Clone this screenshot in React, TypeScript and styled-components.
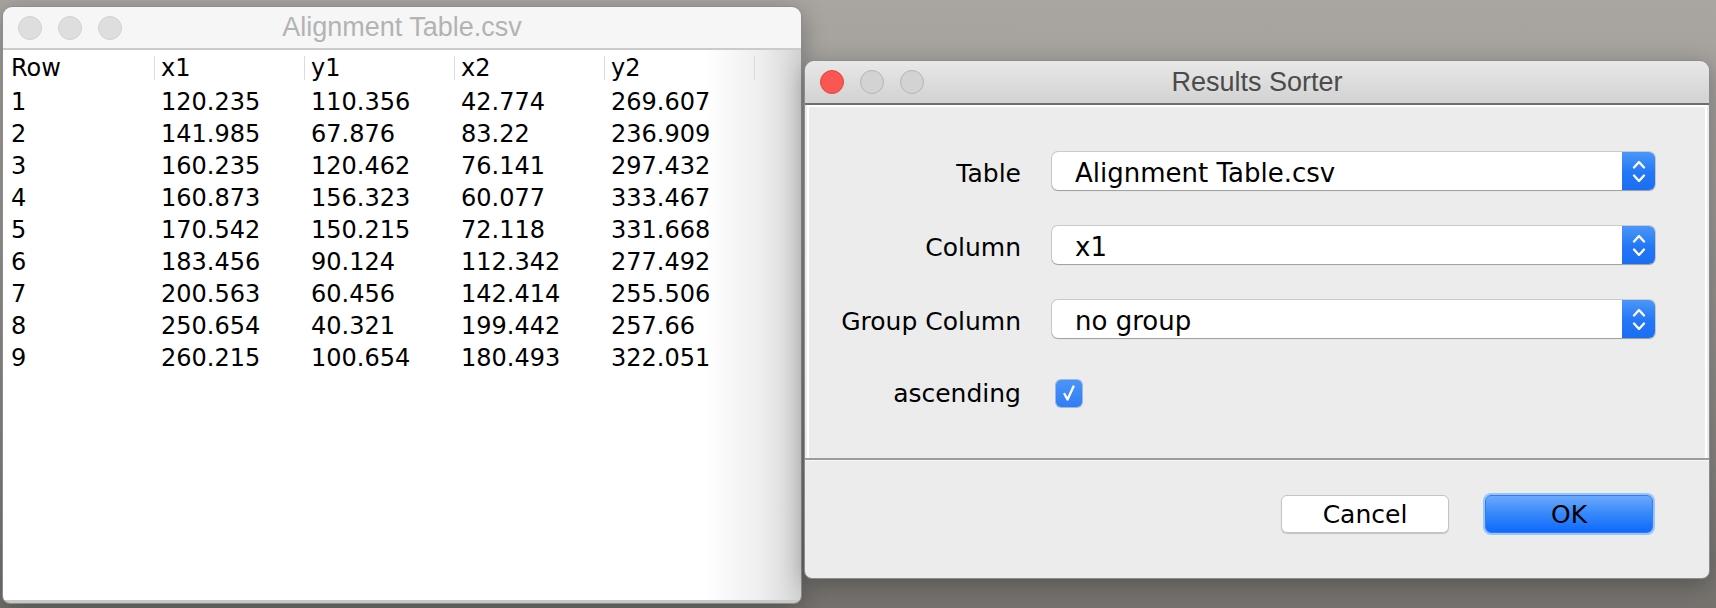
import React from 'react';
import styled, { createGlobalStyle } from 'styled-components';

const GlobalStyle = createGlobalStyle`
  html, body { margin: 0; padding: 0; }
  body { width: 1716px; height: 608px; overflow: hidden; background: #8f8c88; }
  * { box-sizing: border-box; }
`;

const Desktop = styled.div`
  width: 1716px;
  height: 608px;
  padding: 6px 0 0 2px;
  display: flex;
  align-items: flex-start;
  gap: 2px;
  background: linear-gradient(180deg, #a9a6a2 0%, #9e9b97 35%, #8a8783 75%, #75726e 100%);
`;

const WindowFrame = styled.div<{ $w: number; $h: number; $top?: number }>`
  width: ${p => p.$w}px;
  height: ${p => p.$h}px;
  margin-top: ${p => p.$top ?? 0}px;
  display: flex;
  flex-direction: column;
  border: 1px solid #8d8d8d;
  border-radius: 10px 10px 8px 8px;
  overflow: hidden;
  box-shadow: 0 6px 24px rgba(0, 0, 0, 0.3);
`;

const TitleBar = styled.div<{ $active?: boolean }>`
  flex: none;
  height: ${p => (p.$active ? 44 : 43)}px;
  display: grid;
  grid-template-columns: 1fr auto 1fr;
  align-items: center;
  background: ${p => (p.$active ? 'linear-gradient(180deg, #e8e8e8 0%, #d2d2d2 100%)' : '#f6f6f6')};
  border-bottom: 2px solid ${p => (p.$active ? '#6e6e6e' : '#cbcbcb')};
`;

const Lights = styled.div`
  display: flex;
  gap: 16px;
  padding-left: 15px;
`;

const Light = styled.span<{ $color: string; $ring: string }>`
  width: 24px;
  height: 24px;
  border-radius: 50%;
  background: ${p => p.$color};
  border: 1px solid ${p => p.$ring};
`;

const Title = styled.div<{ $active?: boolean }>`
  font-family: 'Liberation Sans', Arial, sans-serif;
  font-size: 27px;
  color: ${p => (p.$active ? '#4b4b4b' : '#b3b3b3')};
  white-space: nowrap;
`;

const TableBody = styled.div`
  flex: 1;
  padding-left: 2px;
  background: linear-gradient(90deg, #ffffff 0%, #ffffff 88%, #eeeeee 95%, #d4d4d4 100%);
  border-bottom: 3px solid #c9c9c9;
  font-family: 'DejaVu Sans', 'Lucida Grande', sans-serif;
  font-size: 24px;
  color: #000;
`;

const Row = styled.div<{ $header?: boolean }>`
  display: grid;
  grid-template-columns: repeat(5, 150px);
  height: ${p => (p.$header ? 36 : 32)}px;
  align-items: center;
`;

const Cell = styled.div<{ $header?: boolean }>`
  padding-left: 6px;
  line-height: ${p => (p.$header ? 24 : 32)}px;
  border-right: ${p => (p.$header ? '1px solid #dcdcdc' : 'none')};
  white-space: nowrap;
`;

const DialogBody = styled.div`
  flex: 1;
  display: flex;
  flex-direction: column;
  background: #ececec;
  font-family: 'DejaVu Sans', 'Lucida Grande', sans-serif;
  font-size: 25px;
  color: #000;
`;

const FormPanel = styled.div`
  margin: 0 2px;
  border: 2px solid #ffffff;
  border-bottom: none;
  padding: 45px 50px 46px 0;
  display: grid;
  grid-template-columns: 1fr 603px;
  column-gap: 31px;
  row-gap: 36px;
  align-items: center;
`;

const Separator = styled.div`
  height: 3px;
  border-top: 2px solid #9c9c9c;
  background: #f7f7f7;
`;

const Label = styled.div<{ $shift?: number }>`
  text-align: right;
  white-space: nowrap;
  padding-top: ${p => p.$shift ?? 0}px;
`;

const Select = styled.div`
  height: 38px;
  display: flex;
  background: #fff;
  border-radius: 6px;
  overflow: hidden;
  box-shadow: 0 0 0 1px rgba(0, 0, 0, 0.14), 0 1px 1px rgba(0, 0, 0, 0.22);
`;

const SelectValue = styled.span`
  flex: 1;
  display: flex;
  align-items: center;
  padding: 3px 0 0 23px;
  font-size: 26px;
  white-space: nowrap;
`;

const Stepper = styled.span`
  width: 33px;
  display: flex;
  flex-direction: column;
  align-items: center;
  justify-content: center;
  gap: 5px;
  background: linear-gradient(180deg, #4a97f9 0%, #2377f5 55%, #1a6ef3 100%);
`;

const CheckRow = styled.div`
  height: 38px;
  display: flex;
  align-items: center;
  padding-left: 4px;
`;

const Checkbox = styled.span`
  width: 26px;
  height: 27px;
  border-radius: 5px;
  background: linear-gradient(180deg, #4b94f8 0%, #2f7ef5 100%);
  box-shadow: 0 0 0 1px rgba(20, 90, 200, 0.35);
  display: flex;
  align-items: center;
  justify-content: center;
`;

const ButtonRow = styled.div`
  flex: 1;
  display: flex;
  justify-content: flex-end;
  align-items: flex-start;
  gap: 36px;
  padding: 34px 56px 0 0;
`;

const Button = styled.button<{ $primary?: boolean }>`
  width: 168px;
  height: 38px;
  border-radius: 6px;
  font-family: 'DejaVu Sans', 'Lucida Grande', sans-serif;
  font-size: 25px;
  color: #000;
  padding: 0;
  border: 1px solid ${p => (p.$primary ? '#2b7ef6' : '#c4c4c4')};
  background: ${p => (p.$primary ? 'linear-gradient(180deg, #6ca9fb 0%, #3a8bf9 45%, #0e69fc 100%)' : '#ffffff')};
  box-shadow: ${p => (p.$primary ? '0 0 0 2px #9ac4fa' : '0 1px 1px rgba(0,0,0,0.18)')};
`;

const Chevron = ({ up }: { up?: boolean }) => (
  <svg width="14" height="9" viewBox="0 0 14 9">
    <path
      d={up ? 'M2 7.5 L7 2 L12 7.5' : 'M2 1.5 L7 7 L12 1.5'}
      fill="none"
      stroke="#fff"
      strokeWidth="2.3"
      strokeLinecap="round"
      strokeLinejoin="round"
    />
  </svg>
);

const rows = [
  ['1', '120.235', '110.356', '42.774', '269.607'],
  ['2', '141.985', '67.876', '83.22', '236.909'],
  ['3', '160.235', '120.462', '76.141', '297.432'],
  ['4', '160.873', '156.323', '60.077', '333.467'],
  ['5', '170.542', '150.215', '72.118', '331.668'],
  ['6', '183.456', '90.124', '112.342', '277.492'],
  ['7', '200.563', '60.456', '142.414', '255.506'],
  ['8', '250.654', '40.321', '199.442', '257.66'],
  ['9', '260.215', '100.654', '180.493', '322.051'],
];

const SelectField = ({ value }: { value: string }) => (
  <Select>
    <SelectValue>{value}</SelectValue>
    <Stepper>
      <Chevron up />
      <Chevron />
    </Stepper>
  </Select>
);

export default function App() {
  return (
    <>
      <GlobalStyle />
      <Desktop>
        <WindowFrame $w={800} $h={598}>
          <TitleBar>
            <Lights>
              <Light $color="#dedede" $ring="#d2d2d2" />
              <Light $color="#dedede" $ring="#d2d2d2" />
              <Light $color="#dedede" $ring="#d2d2d2" />
            </Lights>
            <Title>Alignment Table.csv</Title>
            <span />
          </TitleBar>
          <TableBody>
            <Row $header>
              {['Row', 'x1', 'y1', 'x2', 'y2'].map(h => (
                <Cell $header key={h}>{h}</Cell>
              ))}
            </Row>
            {rows.map(r => (
              <Row key={r[0]}>
                {r.map((v, i) => (
                  <Cell key={i}>{v}</Cell>
                ))}
              </Row>
            ))}
          </TableBody>
        </WindowFrame>

        <WindowFrame $w={906} $h={519} $top={54}>
          <TitleBar $active>
            <Lights>
              <Light $color="#fc5652" $ring="#de4540" />
              <Light $color="#d3d3d3" $ring="#b4b4b4" />
              <Light $color="#d3d3d3" $ring="#b4b4b4" />
            </Lights>
            <Title $active>Results Sorter</Title>
            <span />
          </TitleBar>
          <DialogBody>
            <FormPanel>
              <Label $shift={4}>Table</Label>
              <SelectField value="Alignment Table.csv" />
              <Label $shift={4}>Column</Label>
              <SelectField value="x1" />
              <Label $shift={4}>Group Column</Label>
              <SelectField value="no group" />
              <Label>ascending</Label>
              <CheckRow>
                <Checkbox>
                  <svg width="18" height="20" viewBox="0 0 18 20">
                    <path
                      d="M4.5 11 L7.5 16.5 L13.5 3.5"
                      fill="none"
                      stroke="#fff"
                      strokeWidth="2.4"
                      strokeLinecap="round"
                      strokeLinejoin="round"
                    />
                  </svg>
                </Checkbox>
              </CheckRow>
            </FormPanel>
            <Separator />
            <ButtonRow>
              <Button>Cancel</Button>
              <Button $primary>OK</Button>
            </ButtonRow>
          </DialogBody>
        </WindowFrame>
      </Desktop>
    </>
  );
}
